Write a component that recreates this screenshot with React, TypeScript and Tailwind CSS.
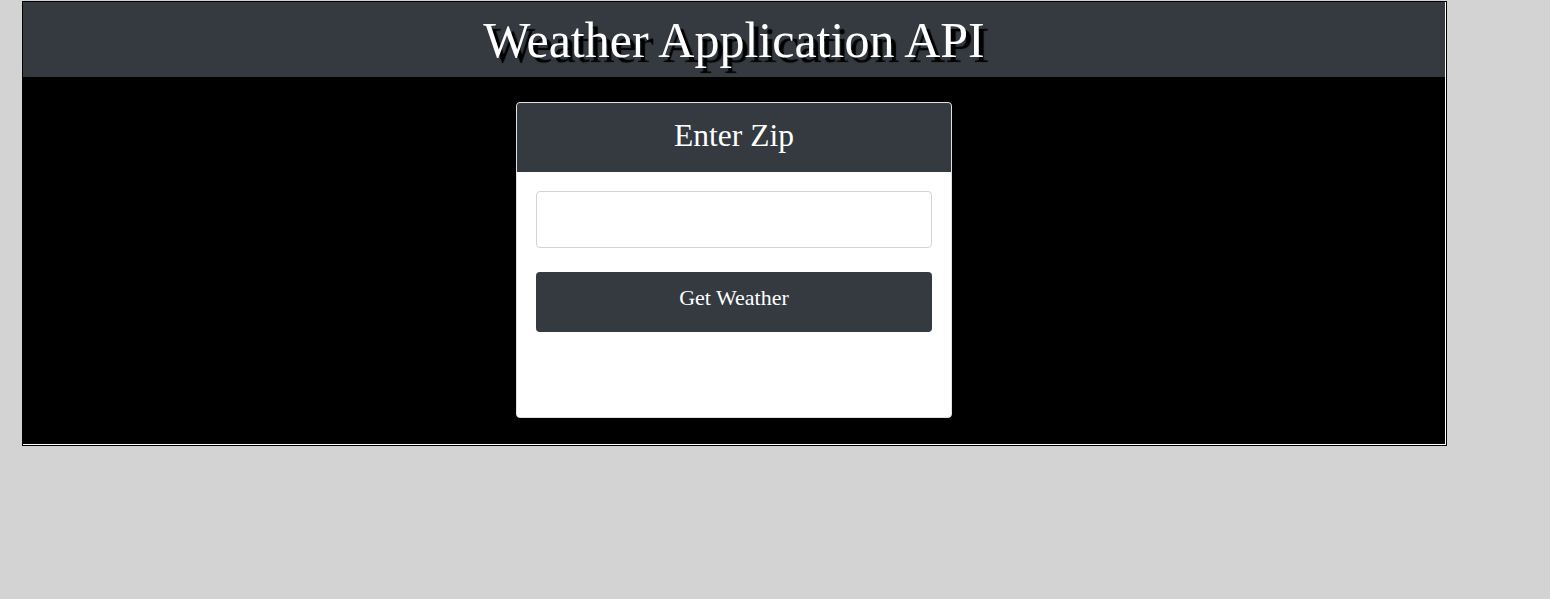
export default function App() {
  return (
    <div className="min-h-[599px] bg-[#d3d3d3] pl-[22px] pt-px" style={{ fontFamily: '"Liberation Serif", "Times New Roman", serif' }}>
      <div className="w-[1425px] border border-black bg-white">
        <div className="mr-px mb-px">
          <div className="h-[75px] bg-[#343a40] flex items-center justify-center">
            <h1 className="text-[50px] leading-none text-white [text-shadow:5px_5px_1px_#000]">Weather Application API</h1>
          </div>
          <div className="bg-black pt-[25px] pb-[26px] flex justify-center">
            <div className="w-[436px] h-[316px] bg-white border border-[#dee2e6] rounded-[4px] overflow-hidden flex flex-col">
              <div className="h-[69px] bg-[#343a40] flex items-center justify-center">
                <h2 className="text-[31.5px] text-white leading-none -mt-1">Enter Zip</h2>
              </div>
              <div className="px-[19px] pt-[19px] flex flex-col gap-[24px]">
                <input type="text" className="h-[57px] w-full border border-[#ced4da] rounded-[4px] px-3 text-lg outline-0" />
                <button className="h-[60px] w-full bg-[#343a40] text-white text-[22px] rounded-[4px] pb-[10px]">Get Weather</button>
              </div>
            </div>
          </div>
        </div>
      </div>
    </div>
  )
}
